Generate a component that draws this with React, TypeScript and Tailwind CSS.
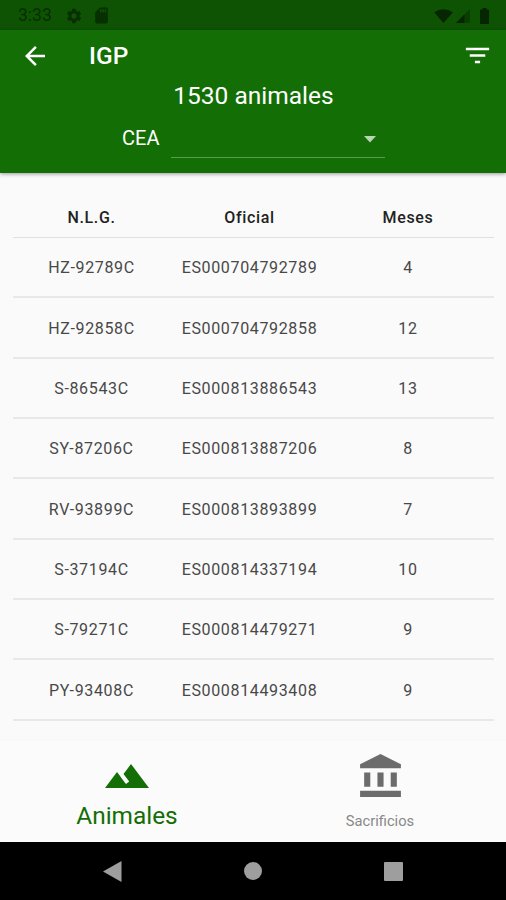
import { MdAccountBalance, MdArrowBack, MdFilterList, MdLandscape, MdSdCard, MdSettings } from "react-icons/md";

const animales = [
  { nlg: "HZ-92789C", oficial: "ES000704792789", meses: 4 },
  { nlg: "HZ-92858C", oficial: "ES000704792858", meses: 12 },
  { nlg: "S-86543C", oficial: "ES000813886543", meses: 13 },
  { nlg: "SY-87206C", oficial: "ES000813887206", meses: 8 },
  { nlg: "RV-93899C", oficial: "ES000813893899", meses: 7 },
  { nlg: "S-37194C", oficial: "ES000814337194", meses: 10 },
  { nlg: "S-79271C", oficial: "ES000814479271", meses: 9 },
  { nlg: "PY-93408C", oficial: "ES000814493408", meses: 9 },
];

const StatusBar = () => (
  <div className="flex h-[30px] items-center bg-[#0e5303] pl-[18px] pr-[17px] pt-px text-[#082f02]">
    <span className="w-[47px] pt-px text-[17.5px] leading-none">3:33</span>
    <MdSettings size={18} />
    <MdSdCard className="ml-[9px]" size={19} />
    <div className="ml-auto flex items-center">
      <svg width="19" height="14" viewBox="0 0 20 15" fill="#062501">
        <path d="M0 3.5Q10-3 20 3.5L10 15z" />
      </svg>
      <svg className="ml-[3px]" width="14" height="14" viewBox="0 0 15 15" fill="#062501">
        <path d="M0 15L15 0v15z" opacity=".45" />
        <path d="M0 15L9 6v9z" />
      </svg>
      <svg className="ml-[10px]" width="9" height="16" viewBox="0 0 9 16" fill="#062501">
        <path d="M2.5 0h4v1.5H8q1 0 1 1V15q0 1-1 1H1q-1 0-1-1V2.5q0-1 1-1h1.5z" />
      </svg>
    </div>
  </div>
);

const Header = () => (
  <header className="relative h-[143px] bg-[#136e05] text-white shadow-[0_1px_4px_rgba(0,0,0,0.4)]">
    <div className="flex h-[51px] items-center pl-[20px] pr-[13px]">
      <MdArrowBack size={30} />
      <h1 className="ml-[39px] pt-[2px] text-[24.5px] font-medium leading-none">IGP</h1>
      <MdFilterList className="ml-auto" size={31} />
    </div>
    <p className="h-[30px] pl-px text-center text-[24.5px] leading-[30px]">1530 animales</p>
    <div className="ml-[122px] flex h-[47px]">
      <span className="w-[49px] pt-[13px] text-[20px] leading-[28px]">CEA</span>
      <div className="flex w-[214px] justify-end border-b border-[#5b9b50] pr-[9px] pt-[25px]">
        <svg width="12" height="7" viewBox="0 0 12 7" fill="#b9d5b5">
          <path d="M0 0h12L6 6.5z" />
        </svg>
      </div>
    </div>
  </header>
);

const Tabla = () => (
  <main className="h-[567px] bg-[#fafafa] pl-[13px] pr-[12px] pt-[24px] text-center tracking-[0.65px]">
    <div className="flex h-[41px] items-center border-b border-[#e0e0e0] pt-[2px] text-[16px] font-medium text-[#222]">
      <span className="w-[157px]">N.L.G.</span>
      <span className="w-[159px]">Oficial</span>
      <span className="w-[158px]">Meses</span>
    </div>
    {animales.map((animal) => (
      <div key={animal.nlg} className="flex h-[60.35px] items-center border-b-2 border-[#e8e8e8] pt-[2px] text-[16px] text-[#484848]">
        <span className="w-[157px]">{animal.nlg}</span>
        <span className="w-[159px]">{animal.oficial}</span>
        <span className="w-[158px]">{animal.meses}</span>
      </div>
    ))}
  </main>
);

const BottomNav = () => (
  <nav className="flex h-[102px] border-t border-[#f8f8f8] bg-[#fbfbfb]">
    <div className="flex w-[254px] flex-col items-center pt-[11px] text-[#136e05]">
      <MdLandscape size={48} />
      <span className="mt-[2px] text-[24.4px] leading-[28px]">Animales</span>
    </div>
    <div className="flex w-[252px] flex-col items-center pt-[11px] text-[#6c6c6c]">
      <MdAccountBalance className="ml-px" size={49} />
      <span className="mt-[10px] text-[14.7px] leading-[20px] text-[#888]">Sacrificios</span>
    </div>
  </nav>
);

const SystemNav = () => (
  <div className="flex h-[58px] items-center justify-between bg-black px-[103px]">
    <svg width="19" height="21" viewBox="0 0 19 21" fill="#9e9e9e">
      <path d="M0 10.5L18.5 0v21z" />
    </svg>
    <div className="h-[18px] w-[18px] rounded-full bg-[#9e9e9e]"></div>
    <div className="h-[19px] w-[19px] rounded-[1px] bg-[#9e9e9e]"></div>
  </div>
);

const App = () => {
  return (
    <div className="h-[900px] w-[506px] overflow-hidden bg-[#fafafa] font-['Roboto',sans-serif]">
      <StatusBar />
      <Header />
      <Tabla />
      <BottomNav />
      <SystemNav />
    </div>
  );
};

export default App;
